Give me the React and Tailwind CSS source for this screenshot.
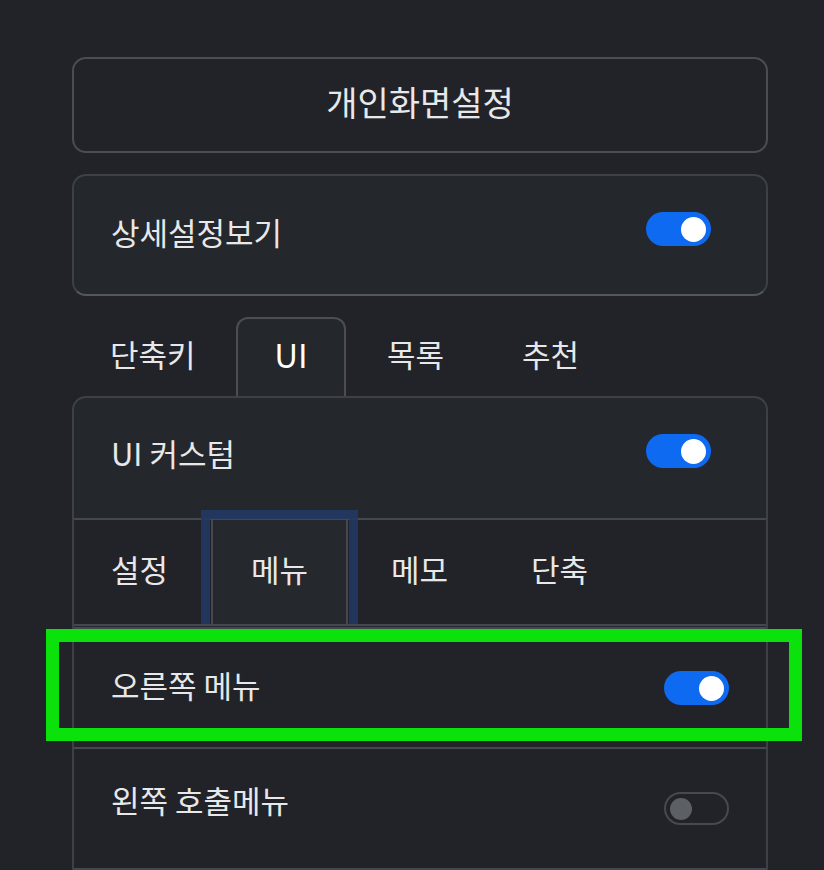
import React from "react";

const font = { fontFamily: '"Noto Sans CJK KR", "Noto Sans", sans-serif' };

function Toggle({ on }) {
  if (on) {
    return (
      <div className="w-[65px] h-[34px] rounded-full bg-[#0f6af2] flex items-center justify-end pr-[5px] shrink-0">
        <div className="w-[25px] h-[25px] rounded-full bg-white" />
      </div>
    );
  }
  return (
    <div className="w-[65px] h-[33px] rounded-full border-2 border-[#46494f] flex items-center justify-start pl-[4px] shrink-0">
      <div className="w-[22px] h-[22px] rounded-full bg-[#5c5f64]" />
    </div>
  );
}

export default function App() {
  return (
    <div
      className="relative w-[824px] h-[870px] overflow-hidden bg-[#212328] text-[#e8e8ea] font-normal"
      style={font}
    >
      <div className="pt-[57px] pl-[72px] w-[768px]">
        {/* title button */}
        <div className="h-[96px] rounded-[14px] border-2 border-[#4a4d53] flex items-center justify-center text-[34px] leading-none pb-[6px]">
          개인화면설정
        </div>

        {/* detail settings */}
        <div className="mt-[21px] h-[122px] rounded-[14px] border-2 border-[#3d4046] border-b-[#55585e] bg-[#24272c] flex items-center justify-between pl-[37px] pr-[55px] pb-[12px]">
          <span className="text-[31px] leading-none mt-[4px]">상세설정보기</span>
          <Toggle on />
        </div>

        {/* tabs */}
        <div className="mt-[21px] h-[79px] flex items-stretch text-[31px] leading-none">
          <div className="w-[164px] pl-[38px] flex items-center pb-[6px]">단축키</div>
          <div className="w-[110px] rounded-t-[12px] border-2 border-b-0 border-[#4a4d53] bg-[#24272c] flex items-center justify-center text-white text-[33px] pb-[6px]">
            UI
          </div>
          <div className="ml-[41px] w-[135px] flex items-center pb-[6px]">목록</div>
          <div className="flex items-center pb-[6px]">추천</div>
        </div>

        {/* UI card */}
        <div className="rounded-t-[14px] border-2 border-b-0 border-[#3d4046] bg-[#24272c]">
          <div className="h-[120px] flex items-center justify-between pl-[37px] pr-[55px] pb-[14px]">
            <span className="text-[31px] leading-none mt-[2px]">UI 커스텀</span>
            <Toggle on />
          </div>
          <div className="h-[106px] border-t-2 border-[#45484e] bg-[#212328] flex items-stretch text-[31px] leading-none">
            <div className="w-[137px] pl-[37px] flex items-center pb-[8px]">설정</div>
            <div className="relative w-[137px] border-x-2 border-[#45484e] bg-[#25282d] flex items-center justify-center pb-[8px]">
              메뉴
              <div className="absolute left-[-12px] right-[-12px] top-[-10px] bottom-0 border-[9px] border-b-0 border-[#233863] opacity-90" />
            </div>
            <div className="ml-[43px] w-[140px] flex items-center pb-[8px]">메모</div>
            <div className="flex items-center pb-[8px]">단축</div>
          </div>
          <div className="h-[3px] border-t-2 border-[#45484e]" />
          <div className="h-[120px] border-t-2 border-[#45484e] bg-[#212328] flex items-center justify-between pl-[37px] pr-[37px]">
            <span className="text-[31px] leading-none -mt-[8px]">오른쪽 메뉴</span>
            <Toggle on />
          </div>
          <div className="h-[121px] border-t-2 border-[#45484e] bg-[#212328] flex items-center justify-between pl-[37px] pr-[37px]">
            <span className="text-[31px] leading-none -mt-[18px]">왼쪽 호출메뉴</span>
            <Toggle />
          </div>
          <div className="h-[10px] border-t-2 border-[#45484e] bg-[#212328]" />
        </div>
      </div>

      {/* green highlight */}
      <div className="absolute left-[46px] top-[629px] w-[756px] h-[112px] border-[13px] border-[#0be20b]" />
    </div>
  );
}
